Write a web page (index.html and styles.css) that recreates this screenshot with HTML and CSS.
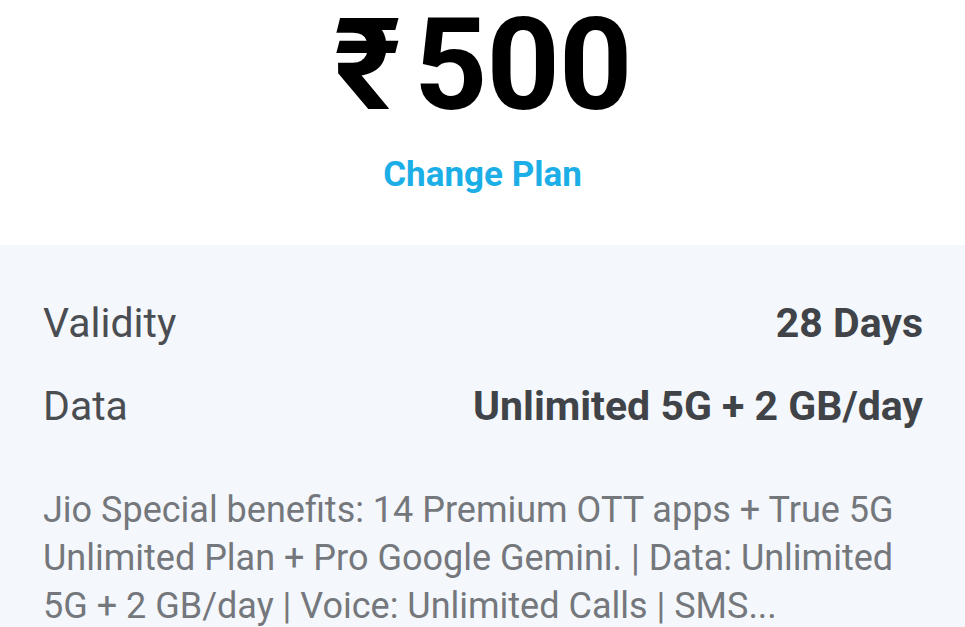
FILE: index.html
```html
<!DOCTYPE html>
<html lang="en">
<head>
  <meta charset="UTF-8">
  <meta name="viewport" content="width=device-width, initial-scale=1.0">
  <title>Plan Details</title>
  <link rel="stylesheet" href="styles.css">
</head>
<body>
  <div class="top">
    <div class="price"><span class="rupee">₹</span>500</div>
    <a class="change-plan" href="#">Change Plan</a>
  </div>

  <div class="details">
    <div class="row">
      <span class="label">Validity</span>
      <span class="value">28 Days</span>
    </div>
    <div class="row">
      <span class="label">Data</span>
      <span class="value">Unlimited 5G + 2 GB/day</span>
    </div>
    <p class="desc">Jio Special benefits: 14 Premium OTT apps + True 5G Unlimited Plan + Pro Google Gemini. | Data: Unlimited 5G + 2 GB/day | Voice: Unlimited Calls | SMS...</p>
  </div>
</body>
</html>
```

FILE: styles.css
```css
body { margin: 0; font-family: Roboto, "Noto Sans", Arial, sans-serif; background: #fff; }
.top { height: 245px; display: flex; flex-direction: column; align-items: center; }
.price { font-size: 128px; font-weight: 700; color: #000; line-height: 130px; letter-spacing: -1px; }
.rupee { margin-right: 14px; }
.change-plan { margin-top: 24px; font-size: 35px; font-weight: 700; color: #1caee6; text-decoration: none; }
.details { box-sizing: border-box; height: 382px; overflow: hidden; background: #f4f7fb; padding: 54px 42px 0 43px; }
.row { display: flex; justify-content: space-between; font-size: 41px; line-height: 48px; margin-bottom: 35px; }
.label { color: #4a4d52; }
.value { color: #404347; font-weight: 700; }
.desc { margin: 56px 0 0 0; font-size: 36px; line-height: 48px; color: #74777c; }
```
